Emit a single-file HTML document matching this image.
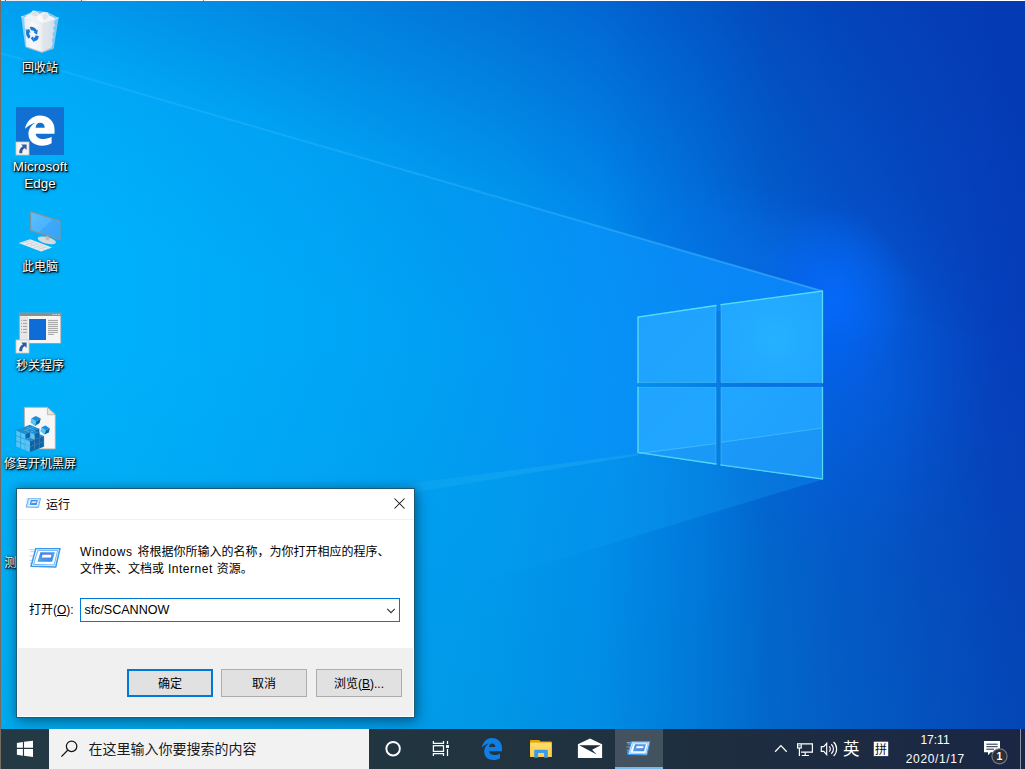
<!DOCTYPE html>
<html lang="zh-CN">
<head>
<meta charset="utf-8">
<title>运行</title>
<style>
html,body{margin:0;padding:0;background:#0a78dc;}
body{width:1025px;height:769px;overflow:hidden;position:relative;font-family:"Liberation Sans","Noto Sans CJK SC",sans-serif;font-size:12px;color:#000;}
#root{position:absolute;left:0;top:0;width:1025px;height:769px;overflow:hidden;}
#wall{position:absolute;left:0;top:0;}
.abs{position:absolute;}
/* desktop icons */
.dlabel{position:absolute;color:#fff;font-size:12px;line-height:17px;text-align:center;white-space:nowrap;text-shadow:1px 1px 1px rgba(0,0,0,1),1px 1px 2px rgba(0,0,0,.9),0 0 3px rgba(0,0,0,.6),0 1px 4px rgba(0,0,0,.4);}
/* dialog */
#dlg{position:absolute;left:16px;top:488px;width:397px;height:228px;border:1px solid #1b5a78;background:#fff;box-shadow:2px 4px 14px rgba(0,0,0,.32), 0 0 8px rgba(0,0,0,.2);}
#dlg .title{position:absolute;left:0;top:0;width:397px;height:30px;background:#fff;border-bottom:1px solid #f0f0f0;}
#dlg .foot{position:absolute;left:1px;top:159px;width:395px;height:68px;background:#f0f0f0;}
.btn{position:absolute;top:180px;width:84px;height:26px;border:1px solid #adadad;background:#e1e1e1;text-align:center;line-height:28.4px;font-size:12px;white-space:nowrap;}
.btn.def{border:2px solid #0078d7;width:82px;height:24px;line-height:26.4px;}
/* taskbar */
#tb{position:absolute;left:1px;top:729px;width:1024px;height:40px;background:linear-gradient(90deg,#233a45 0%,#213540 40%,#20323f 55%,#1e2e3f 69%,#1c2a42 85%,#1a2644 100%);}
</style>
</head>
<body>
<div id="root">
<!--WALL-->
<svg id="wall" width="1025" height="769" viewBox="0 0 1025 769">
<defs>
<linearGradient id="gBot" x1="0" y1="0" x2="1025" y2="0" gradientUnits="userSpaceOnUse">
<stop offset="0" stop-color="#00b2fa"/><stop offset="0.107" stop-color="#00b0fa"/><stop offset="0.293" stop-color="#00a8f8"/><stop offset="0.488" stop-color="#009cf2"/><stop offset="0.585" stop-color="#0090f0"/><stop offset="0.683" stop-color="#0078e0"/><stop offset="0.751" stop-color="#0264d0"/><stop offset="0.829" stop-color="#0456ca"/><stop offset="0.976" stop-color="#0540bc"/><stop offset="1" stop-color="#053eba"/>
</linearGradient>
<!-- darkening above the beam line; gradient runs perpendicular to the line (slope .2895) -->
<linearGradient id="gUp" x1="600" y1="224.6" x2="683.4" y2="-63.4" gradientUnits="userSpaceOnUse">
<stop offset="0" stop-color="#0438b0" stop-opacity="0.07"/><stop offset="0.68" stop-color="#0438b0" stop-opacity="0.455"/><stop offset="1" stop-color="#0438b0" stop-opacity="0.66"/>
</linearGradient>
<linearGradient id="gV" x1="0" y1="0" x2="0" y2="769" gradientUnits="userSpaceOnUse">
<stop offset="0.45" stop-color="#0078a0" stop-opacity="0"/><stop offset="0.78" stop-color="#0078a0" stop-opacity="0.10"/><stop offset="1" stop-color="#0078a0" stop-opacity="0.16"/>
</linearGradient>
<radialGradient id="gGlow" cx="0" cy="0" r="1" gradientUnits="userSpaceOnUse" gradientTransform="translate(838 366) scale(150 210)">
<stop offset="0" stop-color="#0462ea" stop-opacity="0.8"/><stop offset="0.35" stop-color="#0460e6" stop-opacity="0.55"/><stop offset="0.7" stop-color="#045ce2" stop-opacity="0.2"/><stop offset="1" stop-color="#0458dc" stop-opacity="0"/>
</radialGradient>
<radialGradient id="gGlow2" cx="0" cy="0" r="1" gradientUnits="userSpaceOnUse" gradientTransform="translate(834 300) scale(75 95)">
<stop offset="0" stop-color="#046afc" stop-opacity="0.95"/><stop offset="0.4" stop-color="#0466f6" stop-opacity="0.6"/><stop offset="1" stop-color="#0460ee" stop-opacity="0"/>
</radialGradient>
<radialGradient id="gGlow3" cx="0" cy="0" r="1" gradientUnits="userSpaceOnUse" gradientTransform="translate(770 262) rotate(16) scale(170 70)">
<stop offset="0" stop-color="#0872ee" stop-opacity="0.5"/><stop offset="0.5" stop-color="#0870ec" stop-opacity="0.28"/><stop offset="1" stop-color="#086ce8" stop-opacity="0"/>
</radialGradient>
<linearGradient id="gPane" x1="637" y1="300" x2="823" y2="470" gradientUnits="userSpaceOnUse">
<stop offset="0" stop-color="#1ea2fe"/><stop offset="0.5" stop-color="#21a6ff"/><stop offset="1" stop-color="#1e9efc"/>
</linearGradient>
<radialGradient id="gPaneTR" cx="775" cy="338" r="75" gradientUnits="userSpaceOnUse">
<stop offset="0" stop-color="#25b1ff"/><stop offset="1" stop-color="#20a4ff"/>
</radialGradient>
<linearGradient id="gL" x1="0" y1="0" x2="1025" y2="0" gradientUnits="userSpaceOnUse">
<stop offset="0.40" stop-color="#14b0ff" stop-opacity="0"/><stop offset="0.56" stop-color="#14b0ff" stop-opacity="0.09"/><stop offset="0.62" stop-color="#14b0ff" stop-opacity="0.2"/><stop offset="0.80" stop-color="#14b0ff" stop-opacity="0.25"/>
</linearGradient>
<linearGradient id="gHz" x1="0" y1="0" x2="640" y2="0" gradientUnits="userSpaceOnUse">
<stop offset="0.3" stop-color="#60d0ff" stop-opacity="0"/><stop offset="1" stop-color="#60d0ff" stop-opacity="0.5"/>
</linearGradient>
<linearGradient id="gDn" x1="600.0" y1="224.6" x2="558.3" y2="368.7" gradientUnits="userSpaceOnUse">
<stop offset="0" stop-color="#0060d0" stop-opacity="0.10"/><stop offset="0.5" stop-color="#0060d0" stop-opacity="0.045"/><stop offset="1" stop-color="#0060d0" stop-opacity="0"/>
</linearGradient>
<linearGradient id="gLine" x1="0" y1="0" x2="822" y2="0" gradientUnits="userSpaceOnUse">
<stop offset="0" stop-color="#48bcff" stop-opacity="0.15"/><stop offset="0.6" stop-color="#48bcff" stop-opacity="0.22"/><stop offset="1" stop-color="#60c8ff" stop-opacity="0.3"/>
</linearGradient>
<linearGradient id="gW" x1="430" y1="0" x2="822" y2="0" gradientUnits="userSpaceOnUse">
<stop offset="0" stop-color="#0a90ff" stop-opacity="0"/><stop offset="0.53" stop-color="#0a90ff" stop-opacity="0.5"/><stop offset="0.85" stop-color="#0a8cff" stop-opacity="0.7"/><stop offset="1" stop-color="#0a88ff" stop-opacity="0.75"/>
</linearGradient>
</defs>
<rect width="1025" height="769" fill="url(#gBot)"/>
<rect width="1025" height="769" fill="url(#gGlow)"/>
<polygon points="0,0 1025,0 1025,349.8 822,291 0,53" fill="url(#gUp)"/>
<rect width="1025" height="769" fill="url(#gGlow3)"/>
<rect width="1025" height="769" fill="url(#gGlow2)"/>
<polygon points="0,53 822,291 822,460 0,222" fill="url(#gDn)"/>
<rect width="1025" height="769" fill="url(#gV)"/>
<!-- beams -->
<polygon points="0,53 822,291 822.5,479.5 0,728.5" fill="url(#gL)"/>
<polygon points="430,177.5 822,291 822,300 638,320 638,453.5 430,481" fill="url(#gW)"/>
<polygon points="0,538 638,453.5 638,455.5 0,560" fill="url(#gHz)" opacity="0.35"/>
<line x1="0" y1="53" x2="822" y2="291" stroke="url(#gLine)" stroke-width="2.2"/>
<line x1="0" y1="53" x2="822" y2="291" stroke="url(#gLine)" stroke-width="1"/>
<!-- logo panes -->
<g fill="url(#gPane)" stroke="#6fd4fa" stroke-opacity="0.35" stroke-width="1">
<polygon points="638,317 716,305.5 716,382.5 638,382.5"/>
<polygon points="721,304.7 822.5,291 822.5,382.5 721,382.5" fill="url(#gPaneTR)"/>
<polygon points="638,387.5 716,387.5 716,464 638,452.5"/>
<polygon points="721,387.5 822.5,387.5 822.5,479 721,465"/>
</g>
<g fill="none" stroke="#5ce0f4" stroke-opacity="0.9" stroke-width="1.3" stroke-linecap="square">
<path d="M638,382.5V317L716,305.5M721,304.7L822.5,291V382.5"/>
<path d="M638,387.5V452.5L716,464M721,465L822.5,479V387.5"/>
</g>
<polygon points="638.5,454 716,443.8 716,463.5 638.5,452.5" fill="#0a70e0" opacity="0.22"/>
<polygon points="721.5,442.4 822,428 822,478.5 721.5,465" fill="#0a70e0" opacity="0.2"/>
<polyline points="638.5,453.6 716,443.6" fill="none" stroke="#5cd0ff" stroke-opacity="0.5" stroke-width="1"/>
<polyline points="721.5,442.3 822,428" fill="none" stroke="#5cd0ff" stroke-opacity="0.5" stroke-width="1"/>
</svg>
<!--/WALL-->
<!--ICONS-->
<svg class="abs" style="left:0;top:0" width="100" height="480" viewBox="0 0 100 480">
<defs>
<linearGradient id="binL" x1="0" y1="0" x2="1" y2="0"><stop offset="0" stop-color="#e8edf1"/><stop offset="0.5" stop-color="#f7f8fa"/><stop offset="1" stop-color="#eceff2"/></linearGradient>
<linearGradient id="binR" x1="0" y1="0" x2="1" y2="0"><stop offset="0" stop-color="#e3e6ea"/><stop offset="1" stop-color="#cfdfec"/></linearGradient>
<linearGradient id="scr" x1="0" y1="0" x2="1" y2="1"><stop offset="0" stop-color="#5cc0ff"/><stop offset="0.5" stop-color="#4ab4ff"/><stop offset="0.52" stop-color="#3da9fb"/><stop offset="1" stop-color="#38a4f8"/></linearGradient>
<linearGradient id="cubeA" x1="0" y1="0" x2="0" y2="1"><stop offset="0" stop-color="#6fd0f6"/><stop offset="1" stop-color="#2b9de0"/></linearGradient>
<g id="sc">
<rect x="0" y="0" width="13" height="13" fill="#f4f4f2" stroke="#c8c8c4" stroke-width="0.8"/>
<path d="M5.2 2.6H10.6V8L8.7 6.1C6.9 7.2 6.1 8.8 6.3 11.2H3.3C2.9 8.4 4.2 5.8 6.9 4.3Z" fill="#2b5ca8"/>
</g>
</defs>
<!-- recycle bin -->
<g>
<polygon points="21.2,16.4 34.9,10.6 47.9,12.2 58.6,17.7 42,23.4" fill="#dbeefa" fill-opacity="0.55"/>
<polygon points="21.2,16.4 42,23.4 42,52.6 25.2,46.8" fill="#e6f2fb" fill-opacity="0.6"/>
<polygon points="42,23.4 58.6,17.7 53.8,48.2 42,52.6" fill="#cfe4f4" fill-opacity="0.6"/>
<path d="M24.4 19L26.5 15.2L30.2 13.8L33.2 10.2L37.4 12.2L39.6 14L43.6 12L47.4 12.4L49.2 15.6L53.6 17.2L55.4 19.4L42 23.8Z" fill="#f1f2f4"/>
<path d="M31 14.6L33.4 11L37 12.8L38.6 15.2L35 16.6Z" fill="#dcdfe4"/>
<path d="M42.6 14.4L46.8 13L48.4 16L46 19.6L43 19.4Z" fill="#e1e3e7"/>
<path d="M37 16.6L41 15.4L43.4 19.8L42 22.6L38.4 20.6Z" fill="#fafafb"/>
<polygon points="24.2,18.8 42,23.8 42,52 26.4,46.6" fill="url(#binL)"/>
<path d="M42 23.8L55.4 19.4L53.8 22.6L55 25.2L53 28L54.4 31L52.4 34L53.6 37L51.8 40L52.8 43.2L51.4 47.6L42 52Z" fill="url(#binR)"/>
<path d="M21.2 16.4L42 23.4L58.6 17.7" fill="none" stroke="#eaf5fd" stroke-width="0.9" stroke-opacity="0.9"/>
<path d="M25.6 47L42 52.4L53.6 48.2" fill="none" stroke="#cdbfb8" stroke-width="1" stroke-opacity="0.8"/>
<g transform="translate(32.4 34.0) skewY(15) scale(0.92 1) translate(-32.4 -34.0)"><path d="M30.16 29.20A5.30 5.30 0 0 1 36.28 30.39" fill="none" stroke="#1878d6" stroke-width="3.3"/><polygon points="37.44,33.20 38.34,28.06 33.96,32.44" fill="#1878d6"/><path d="M37.68 34.46A5.30 5.30 0 0 1 33.59 39.16" fill="none" stroke="#1878d6" stroke-width="3.3"/><polygon points="30.57,38.76 34.57,42.11 32.97,36.13" fill="#1878d6"/><path d="M29.36 38.34A5.30 5.30 0 0 1 27.33 32.45" fill="none" stroke="#1878d6" stroke-width="3.3"/><polygon points="29.19,30.04 24.29,31.83 30.27,33.43" fill="#1878d6"/></g>
</g>
<!-- edge tile -->
<rect x="16" y="107" width="48" height="48" fill="#1071d2"/>
<path transform="translate(17.9 109.9) scale(1.465 1.38)" fill="#fff" fill-rule="evenodd" d="M4.9 13.7C5.5 9 9.5 4.1 14.8 4.1C21 4.1 25 8.5 25 14L25 17.2L12.1 17.2C12.3 19.5 14.5 21.1 17.6 21.1C19.6 21.1 21.5 20.5 23 19.5L23 24.2C21.3 25.3 19.2 26 16.5 26C11 26 7.2 22.5 7.2 17.5C7.2 14 9 11 12 9.3C9 10 6.5 11.8 4.9 13.7ZM12.1 12.9L18.3 12.9C18.3 10.7 17 9.4 15.1 9.4C13.4 9.4 12.3 10.8 12.1 12.9Z"/>
<use href="#sc" x="16" y="142"/>
<!-- this pc -->
<g>
<polygon points="18.7,242.9 30.2,239.3 52,247.6 41.1,251.5" fill="#e9ebed"/>
<path d="M22 243L30 240.6M26 244.6L34 242M30 246.2L38 243.6M34 247.8L42 245.2M38 249.4L46 246.8" stroke="#c9ccd0" stroke-width="0.7" fill="none"/>
<path d="M24 241.6L45 249.8M28 240.4L48.6 248.4" stroke="#cfd2d6" stroke-width="0.6" fill="none"/>
<ellipse cx="46.8" cy="240.4" rx="9.4" ry="3.2" fill="#d6d8db" transform="rotate(14 46.8 240.4)"/>
<polygon points="45.8,234 49,235 49,240.6 45.8,239.8" fill="#b9bcc0"/>
<polygon points="30.2,210.9 60.5,220.6 60.5,240.6 30.2,230.7" fill="#8d9196"/>
<polygon points="31.2,212.4 59.4,221.4 59.4,239 31.2,229.8" fill="url(#scr)"/>
</g>
<!-- window app -->
<g>
<rect x="19.3" y="313" width="41.6" height="30.4" fill="#f5f5f5" stroke="#9a9a9a" stroke-width="0.8"/>
<rect x="19.3" y="313" width="41.6" height="3" fill="#8e8e8e"/>
<rect x="52.4" y="314" width="1.8" height="1" fill="#d8d8d8"/><rect x="55.2" y="314" width="1.8" height="1" fill="#d8d8d8"/><rect x="58" y="314" width="1.8" height="1" fill="#d8d8d8"/>
<rect x="20" y="316.2" width="8" height="26.6" fill="#e6e6e6"/>
<path d="M21 320.4H22M23 320.4H27M21 323.4H22M23 323.4H27M21 326.4H22M23 326.4H27M21 329.4H22M23 329.4H27M21 332.4H22M23 332.4H27" stroke="#9a9a9a" stroke-width="0.9"/>
<rect x="29.1" y="319" width="16.9" height="21" fill="#0f6cd6"/>
<path d="M48 320.4H58M48 322.4H58M48 324.4H58M48 326.4H58M48 328.4H58M48 330.4H58M48 332.4H58M48 334.4H54" stroke="#8c8c8c" stroke-width="0.8"/>
<use href="#sc" x="16" y="340"/>
</g>
<!-- reg file -->
<g>
<path d="M24.4 407.3H47.4L55.3 414.7V448.9H24.4Z" fill="#f7f7f7" stroke="#b7a9a0" stroke-width="0.8"/>
<path d="M47.4 407.3V414.7H55.3Z" fill="#e4e4e4" stroke="#b7a9a0" stroke-width="0.7" stroke-linejoin="round"/>
<g>
<polygon points="31.2,418.6 35.8,416 40.8,418.4 36.2,421.4" fill="#1c8fd6"/>
<polygon points="31.2,418.6 36.2,421.4 35,426 30.6,422.8" fill="#52c6fa"/>
<polygon points="36.2,421.4 40.8,418.4 39.6,423 35,426" fill="#0e65a6"/>
<polygon points="41.4,427.2 45.6,425.6 49.8,428.4 45.6,430.6" fill="#1c8fd6"/>
<polygon points="41.4,427.2 45.6,430.6 44.6,434.6 40.4,431.6" fill="#52c6fa"/>
<polygon points="45.6,430.6 49.8,428.4 48.8,432.4 44.6,434.6" fill="#0e65a6"/>
<polygon points="29.90,428.48 25.24,426.53 29.90,424.77 34.56,426.72" fill="#1c8fd6"/><polygon points="34.56,435.83 39.22,434.07 39.22,428.67 34.56,430.43" fill="#0e65a6"/><polygon points="34.56,430.43 29.90,428.48 34.56,426.72 39.22,428.67" fill="#1c8fd6"/><polygon points="25.24,430.24 20.58,428.29 25.24,426.53 29.90,428.48" fill="#1c8fd6"/><polygon points="39.22,448.58 43.88,446.82 43.88,441.42 39.22,443.18" fill="#0e65a6"/><polygon points="20.58,448.20 15.92,446.25 15.92,440.85 20.58,442.80" fill="#52c6fa"/><polygon points="39.22,443.18 43.88,441.42 43.88,436.02 39.22,437.78" fill="#0e65a6"/><polygon points="39.22,437.78 34.56,435.83 39.22,434.07 43.88,436.02" fill="#1c8fd6"/><polygon points="20.58,442.80 15.92,440.85 15.92,435.45 20.58,437.40" fill="#52c6fa"/><polygon points="20.58,437.40 15.92,435.45 15.92,430.05 20.58,432.00" fill="#52c6fa"/><polygon points="20.58,432.00 15.92,430.05 20.58,428.29 25.24,430.24" fill="#1c8fd6"/><polygon points="29.90,432.19 25.24,430.24 29.90,428.48 34.56,430.43" fill="#1c8fd6"/><polygon points="34.56,450.34 39.22,448.58 39.22,443.18 34.56,444.94" fill="#0e65a6"/><polygon points="25.24,450.15 20.58,448.20 20.58,442.80 25.24,444.75" fill="#52c6fa"/><polygon points="25.24,444.75 20.58,442.80 20.58,437.40 25.24,439.35" fill="#52c6fa"/><polygon points="34.56,444.94 39.22,443.18 39.22,437.78 34.56,439.54" fill="#0e65a6"/><polygon points="34.56,439.54 29.90,437.59 29.90,432.19 34.56,434.14" fill="#52c6fa"/><polygon points="34.56,439.54 39.22,437.78 39.22,432.38 34.56,434.14" fill="#0e65a6"/><polygon points="34.56,434.14 29.90,432.19 34.56,430.43 39.22,432.38" fill="#1c8fd6"/><polygon points="25.24,439.35 20.58,437.40 20.58,432.00 25.24,433.95" fill="#52c6fa"/><polygon points="25.24,439.35 29.90,437.59 29.90,432.19 25.24,433.95" fill="#0e65a6"/><polygon points="25.24,433.95 20.58,432.00 25.24,430.24 29.90,432.19" fill="#1c8fd6"/><polygon points="29.90,452.10 25.24,450.15 25.24,444.75 29.90,446.70" fill="#52c6fa"/><polygon points="29.90,452.10 34.56,450.34 34.56,444.94 29.90,446.70" fill="#0e65a6"/><polygon points="29.90,446.70 25.24,444.75 25.24,439.35 29.90,441.30" fill="#52c6fa"/><polygon points="29.90,446.70 34.56,444.94 34.56,439.54 29.90,441.30" fill="#0e65a6"/><polygon points="29.90,441.30 25.24,439.35 29.90,437.59 34.56,439.54" fill="#1c8fd6"/><path d="M20.58 432.00L15.92 430.05L15.92 435.45M34.56 444.94L39.22 443.18L39.22 448.58M34.56 430.43L39.22 428.67L39.22 434.07M29.90 441.30L25.24 439.35L25.24 444.75M29.90 441.30L34.56 439.54L34.56 444.94M39.22 437.78L43.88 436.02L43.88 441.42M25.24 439.35L20.58 437.40L20.58 442.80M20.58 437.40L15.92 435.45L15.92 440.85M34.56 434.14L29.90 432.19L29.90 437.59M34.56 434.14L39.22 432.38L39.22 437.78M39.22 443.18L43.88 441.42L43.88 446.82M29.90 446.70L25.24 444.75L25.24 450.15M29.90 446.70L34.56 444.94L34.56 450.34M25.24 444.75L20.58 442.80L20.58 448.20M20.58 442.80L15.92 440.85L15.92 446.25M34.56 439.54L39.22 437.78L39.22 443.18M25.24 433.95L20.58 432.00L20.58 437.40M25.24 433.95L29.90 432.19L29.90 437.59" fill="none" stroke="#0a4f8a" stroke-opacity="0.45" stroke-width="0.5"/>
</g>
</g>
</svg>
<div class="dlabel" style="left:2px;top:60.2px;width:76px;">回收站</div>
<div class="dlabel" style="left:2px;top:158px;width:76px;font-size:13.4px;">Microsoft<br>Edge</div>
<div class="dlabel" style="left:2px;top:258.6px;width:76px;">此电脑</div>
<div class="dlabel" style="left:2px;top:358.2px;width:76px;">秒关程序</div>
<div class="dlabel" style="left:2px;top:456.2px;width:76px;">修复开机黑屏</div>
<div class="dlabel" style="left:4.4px;top:555.4px;text-align:left;">测</div>
<!--/ICONS-->
<!--DIALOG-->
<div id="dlg">
<div class="title"></div>
<div class="foot"></div>
<div class="abs" style="left:63px;top:109px;width:318px;height:22px;border:1px solid #0078d7;background:#fff;"></div>
<svg class="abs" style="left:0;top:0" width="397" height="228" viewBox="0 0 397 228">
<defs>
<linearGradient id="rO" x1="0" y1="0" x2="0.3" y2="1"><stop offset="0" stop-color="#e2f1ff"/><stop offset="0.45" stop-color="#8cc4f6"/><stop offset="1" stop-color="#3f97ea"/></linearGradient>
<linearGradient id="rI" x1="0" y1="0" x2="0.6" y2="1"><stop offset="0" stop-color="#2a86e6"/><stop offset="0.6" stop-color="#4aa4f2"/><stop offset="1" stop-color="#2f8eea"/></linearGradient>
<symbol id="runico" viewBox="0 0 32 20" preserveAspectRatio="none">
<path d="M0.4 1.6H6.6M1.6 3.7H6M0.2 7.9H5M0.4 12.4H3.8M0.6 15.2H3" stroke="#a6d0f8" stroke-width="0.9" fill="none"/>
<polygon points="6.9,0.4 31,0.4 26.8,18.9 2,18.2" fill="#eef6fe" stroke="#3c98ee" stroke-width="1.5" stroke-linejoin="round"/>
<polygon points="8.9,2.4 28.6,2.4 25.2,16.9 4.6,16.4" fill="#fff" stroke="#62aef2" stroke-width="0.9"/>
<polygon points="11.4,4.2 25.9,4.2 23.1,13.8 8.6,13.8" fill="url(#rI)"/>
<polygon points="13.2,6.3 23.1,6.3 22.2,10 12.2,10" fill="#fff" stroke="#5b62c8" stroke-width="0.7"/>
</symbol>
</defs>
<!-- title icon (16px) -->
<use href="#runico" x="8.2" y="9" width="15.8" height="10"/>
<!-- close -->
<path d="M377.5 9.5L387.5 19.5M387.5 9.5L377.5 19.5" stroke="#111" stroke-width="1.05" fill="none"/>
<!-- big icon (32px) -->
<use href="#runico" x="12" y="59" width="32" height="20"/>
<!-- combobox chevron -->
<polyline points="370.2,119.8 374,123.6 377.8,119.8" fill="none" stroke="#333" stroke-width="1.1"/>
</svg>
<div class="abs" style="left:29px;top:6.5px;font-size:12px;line-height:18px;">运行</div>
<div class="abs" id="dtxt" style="left:63px;top:54.8px;font-size:12px;line-height:17.4px;white-space:nowrap;"><span class="lat" style="letter-spacing:0.55px">Windows</span><span style="display:inline-block;width:4.9px"></span>将根据你所输入的名称，为你打开相应的程序、<br>文件夹、文档或<span style="display:inline-block;width:4px"></span><span class="lat" style="letter-spacing:0.5px">Internet</span><span style="display:inline-block;width:4px"></span>资源。</div>
<div class="abs" style="left:12px;top:111.6px;font-size:12px;line-height:18px;white-space:nowrap;">打开(<span style="text-decoration:underline">O</span>):</div>
<div class="abs" style="left:67.4px;top:112px;font-size:12.6px;line-height:18px;letter-spacing:-0.04px;white-space:nowrap;">sfc/SCANNOW</div>
<div class="btn def" style="left:110px;">确定</div>
<div class="btn" style="left:204px;">取消</div>
<div class="btn" style="left:299px;">浏览(<span style="text-decoration:underline">B</span>)...</div>
</div>
<!--/DIALOG-->
<!--TASKBAR-->
<div id="tb">
<svg class="abs" style="left:-1px;top:0" width="1025" height="40" viewBox="0 0 1025 40">
<defs>
<linearGradient id="fold" x1="0" y1="0" x2="0" y2="1"><stop offset="0" stop-color="#ffdc72"/><stop offset="1" stop-color="#ffcf48"/></linearGradient>
<linearGradient id="runO" x1="0" y1="0" x2="0.3" y2="1"><stop offset="0" stop-color="#d4ecff"/><stop offset="0.5" stop-color="#7fbef5"/><stop offset="1" stop-color="#4a9fee"/></linearGradient>
<linearGradient id="runI" x1="0" y1="0" x2="0" y2="1"><stop offset="0" stop-color="#2f8fe8"/><stop offset="1" stop-color="#58b4f8"/></linearGradient>
</defs>
<!-- active run button -->
<rect x="615" y="0" width="48" height="40" fill="#fff" fill-opacity="0.17"/>
<rect x="615" y="38" width="48" height="2" fill="#76b9ed"/>
<!-- start -->
<g fill="#fff">
<polygon points="16.9,14.05 22.9,13 22.9,18.85 16.9,18.85"/>
<polygon points="24.05,12.8 33,11.8 33,18.85 24.05,18.85"/>
<polygon points="16.9,20.1 22.9,20.1 22.9,26.65 16.9,25.7"/>
<polygon points="24.05,20.1 33,20.1 33,28 24.05,26.85"/>
</g>
<!-- search box -->
<rect x="49" y="0" width="320" height="40" fill="#f2f2f2"/>
<rect x="49" y="0" width="320" height="1" fill="#fbfbfb"/>
<circle cx="71.6" cy="17.3" r="5.25" fill="none" stroke="#151515" stroke-width="1.25"/>
<line x1="67.7" y1="21.3" x2="61.4" y2="27.6" stroke="#151515" stroke-width="1.3"/>
<!-- cortana -->
<circle cx="393.1" cy="19.7" r="6.75" fill="none" stroke="#fff" stroke-width="1.9"/>
<!-- task view -->
<g fill="none" stroke="#fff" stroke-width="1.25">
<polyline points="433.4,12 433.4,14.4 443.5,14.4 443.5,12"/>
<rect x="433.4" y="16.7" width="10.1" height="5.7"/>
<polyline points="433.4,27 433.4,24.6 443.5,24.6 443.5,27"/>
<line x1="447.5" y1="12" x2="447.5" y2="15"/>
<line x1="447.5" y1="20" x2="447.5" y2="27"/>
</g>
<rect x="446" y="16.1" width="3" height="2.8" fill="#fff"/>
<!-- edge -->
<path transform="translate(477 5)" fill="#0f7fe6" fill-rule="evenodd" d="M4.9 13.7C5.5 9 9.5 4.1 14.8 4.1C21 4.1 25 8.5 25 14L25 17.2L12.1 17.2C12.3 19.5 14.5 21.1 17.6 21.1C19.6 21.1 21.5 20.5 23 19.5L23 24.2C21.3 25.3 19.2 26 16.5 26C11 26 7.2 22.5 7.2 17.5C7.2 14 9 11 12 9.3C9 10 6.5 11.8 4.9 13.7ZM12.1 12.9L18.3 12.9C18.3 10.7 17 9.4 15.1 9.4C13.4 9.4 12.3 10.8 12.1 12.9Z"/>
<!-- explorer -->
<path d="M530.1 11.4Q530.1 10.9 530.6 10.9L539.3 10.9L540.3 12.4L551.2 12.4Q551.7 12.4 551.7 12.9L551.7 28L530.1 28Z" fill="#e8a600"/>
<rect x="530.1" y="13.6" width="21.6" height="14.4" fill="url(#fold)"/>
<path d="M534.2 28.8L534.2 21.6Q534.2 20.8 535 20.8L547 20.8Q547.8 20.8 547.8 21.6L547.8 28.8L544.1 28.8L544.1 24.1L538.1 24.1L538.1 28.8Z" fill="#3b9be9"/>
<!-- mail -->
<polygon points="577.9,15.2 590,9.6 602.1,15.2 602.1,29 577.9,29" fill="#fff"/>
<polygon points="579.2,16.3 600.8,16.3 592.1,20.85 596.7,25.6" fill="#1f2f3f"/>
<!-- run icon -->
<use href="#runico" x="626.3" y="12.3" width="24.4" height="14.4"/>
<!-- tray chevron -->
<polyline points="775.1,22.8 780.9,16.6 786.7,22.8" fill="none" stroke="#fff" stroke-width="1.25"/>
<!-- network -->
<g fill="none" stroke="#fff" stroke-width="1.2">
<path d="M801.6 14.8H812.4V23.2H801"/>
<path d="M805.2 23.2V26.5M801.8 26.5H808.9"/>
<rect x="797.6" y="14.8" width="3.6" height="4.2"/>
<path d="M799.4 19V27"/>
<path d="M798.6 16.2L799.4 17.2L800.2 16.2" stroke-width="0.8"/>
</g>
<!-- volume -->
<g fill="none" stroke="#fff" stroke-width="1.15">
<polygon points="821.3,17.6 823.8,17.6 826.7,14.3 826.7,25.7 823.8,22.4 821.3,22.4"/>
<path d="M829.2 17.4A3.6 3.6 0 0 1 829.2 22.6"/>
<path d="M831.3 15.2A6.4 6.4 0 0 1 831.3 24.8"/>
<path d="M833.6 13A9.6 9.6 0 0 1 833.6 27"/>
</g>
<!-- ime box -->
<rect x="873.8" y="12.7" width="14.4" height="14.4" fill="#fff"/>
<!-- notification -->
<path d="M984 12H1000V23.2H990.8L988 26.2V23.2H984Z" fill="#fff"/>
<path d="M986.4 15.2H997.6M986.4 17.7H997.6M986.4 20.2H994" stroke="#1c2a46" stroke-width="1"/>
<circle cx="999.5" cy="27.3" r="7.6" fill="#2c2f38" stroke="#7c8088" stroke-width="1.1"/>
<!-- show desktop -->
<rect x="1020" y="0" width="1" height="40" fill="#8a92a4"/>
</svg>
<div class="abs" style="left:87.5px;top:10.4px;font-size:14px;line-height:20px;color:#1a1a1a;white-space:nowrap;">在这里输入你要搜索的内容</div>
<div class="abs" style="left:841.3px;top:8.2px;width:18px;font-size:16.5px;line-height:24px;color:#fff;text-align:center;">英</div>
<div class="abs" style="left:872.8px;top:12.6px;width:14.4px;font-size:12px;line-height:17px;color:#111;text-align:center;">拼</div>
<div class="abs" style="left:894px;top:3px;width:80px;text-align:center;font-size:12px;line-height:16px;color:#fff;">17:11</div>
<div class="abs" style="left:894px;top:22px;width:80px;text-align:center;font-size:12px;line-height:16px;color:#fff;letter-spacing:0.62px;text-indent:0.6px;">2020/1/17</div>
<div class="abs" style="left:993px;top:21px;width:11px;text-align:center;font-size:10.5px;font-weight:bold;line-height:13px;color:#fff;">1</div>
</div>
<!--/TASKBAR-->
<div class="abs" style="left:0;top:0;width:1025px;height:1px;background:linear-gradient(90deg,#f1eaf0 0,#f1eaf0 86px,#fdfdfd 86px,#fdfdfd 100%);"></div>
<div class="abs" style="left:5px;top:0;width:1px;height:1px;background:#6e6e72;"></div><div class="abs" style="left:81px;top:0;width:1px;height:1px;background:#6e6e72;"></div><div class="abs" style="left:203px;top:0;width:1px;height:1px;background:#8a8a8e;"></div>
<div class="abs" style="left:0;top:0;width:1px;height:769px;background:#7a6a64;"></div>
</div>
</body>
</html>
